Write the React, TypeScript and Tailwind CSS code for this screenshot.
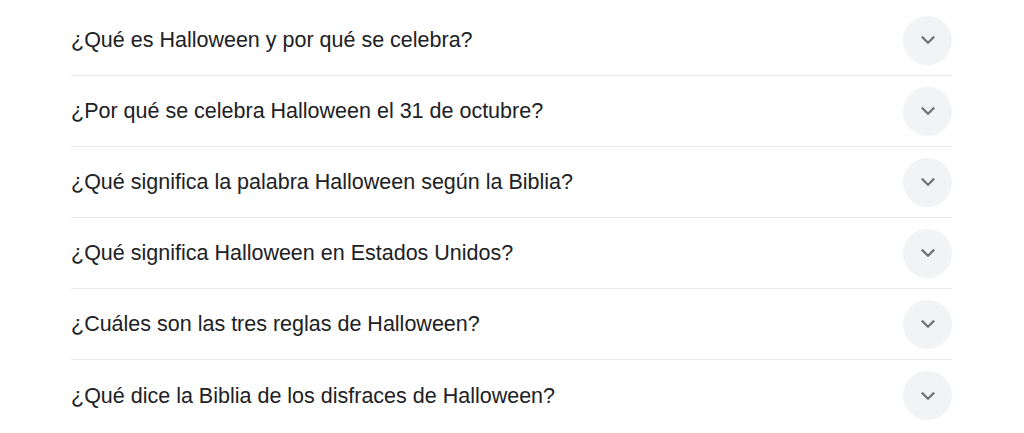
import React from "react";

const questions = [
  "¿Qué es Halloween y por qué se celebra?",
  "¿Por qué se celebra Halloween el 31 de octubre?",
  "¿Qué significa la palabra Halloween según la Biblia?",
  "¿Qué significa Halloween en Estados Unidos?",
  "¿Cuáles son las tres reglas de Halloween?",
  "¿Qué dice la Biblia de los disfraces de Halloween?",
];

function Chevron() {
  return (
    <svg width="16" height="10" viewBox="0 0 16 10" fill="none">
      <polyline
        points="1.8,1.6 8,7.8 14.2,1.6"
        stroke="#70757a"
        strokeWidth="2.2"
        strokeLinecap="butt"
        strokeLinejoin="miter"
      />
    </svg>
  );
}

export default function App() {
  return (
    <div className="w-[1024px] h-[433px] bg-white pt-[5px] font-['Liberation_Sans',Arial,sans-serif]">
      <div className="ml-[71px] w-[881px]">
        {questions.map((q, i) => (
          <div
            key={q}
            className={
              "flex items-center justify-between h-[71px] " +
              (i < questions.length - 1 ? "border-b border-[#e8eaed]" : "")
            }
          >
            <span className="text-[21.5px] leading-7 text-[#202124]">{q}</span>
            <button className="w-[49px] h-[49px] rounded-full bg-[#f1f3f4] flex items-center justify-center">
              <Chevron />
            </button>
          </div>
        ))}
      </div>
    </div>
  );
}
